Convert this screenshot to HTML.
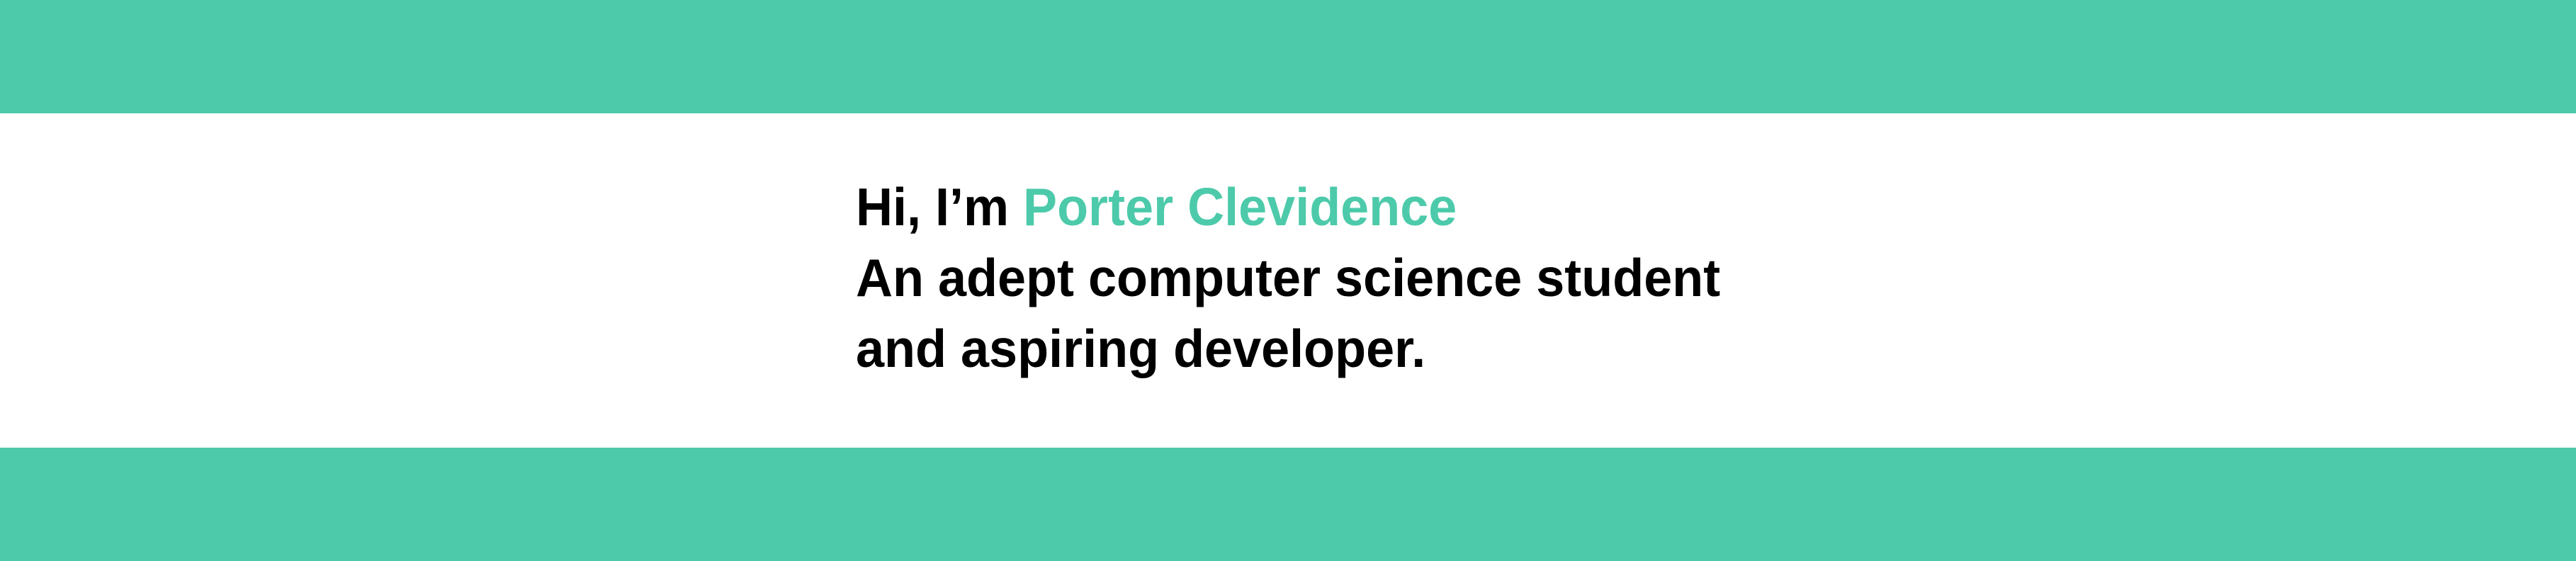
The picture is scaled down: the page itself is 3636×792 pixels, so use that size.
<!DOCTYPE html>
<html><head><style>
html,body{margin:0;padding:0;width:3636px;height:792px;background:#fff;overflow:hidden}
.band{position:absolute;left:0;width:3636px;background:#4ccaaa}
.t{position:absolute;left:1208px;top:242px;font-family:"Liberation Sans",sans-serif;font-weight:bold;font-size:75px;line-height:100px;color:#000;transform:scaleX(0.96);transform-origin:0 0;white-space:nowrap}
.g{color:#4ccaaa}
</style></head><body>
<div class="band" style="top:0;height:160px"></div>
<div class="band" style="top:632px;height:160px"></div>
<div class="t">Hi, I’m <span class="g">Porter Clevidence</span><br>An adept computer science student<br>and aspiring developer.</div>
</body></html>
